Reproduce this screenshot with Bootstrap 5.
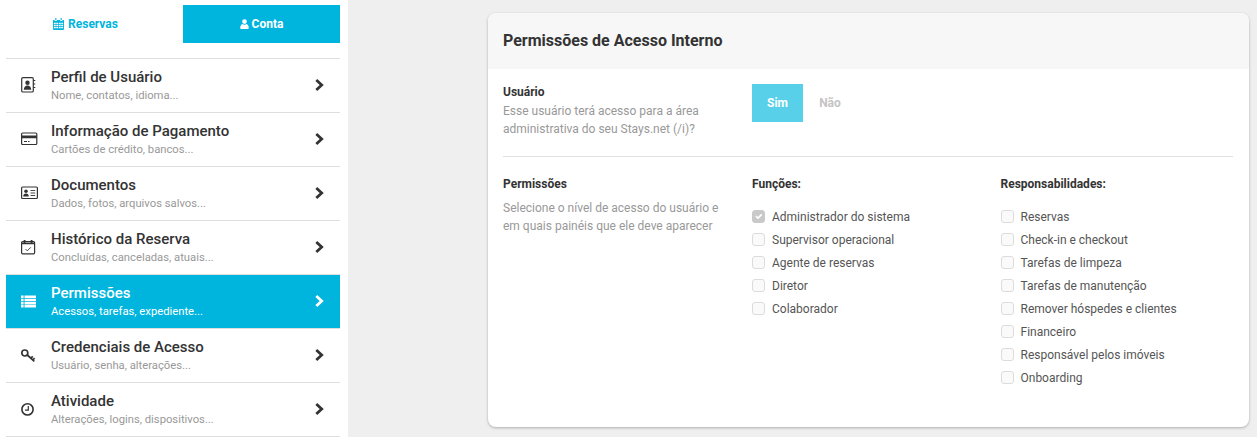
<!DOCTYPE html>
<html lang="pt"><head><meta charset="utf-8"><title>Permissões</title>
<link rel="stylesheet" href="https://cdn.jsdelivr.net/npm/bootstrap@5.3.0/dist/css/bootstrap.min.css">
<style>
html,body{height:437px;overflow:hidden}
body{background:#efefef;font-family:Roboto,"Liberation Sans",sans-serif;color:#333}
.side-col{width:348px;height:437px;background:#fff;padding:5px 8px 0 6px;flex:none}
.tab-row{height:54px;border-bottom:1px solid #dedede}
.tab-cell{width:159px;height:38px;font-size:12px;font-weight:700;color:#00b5dd;text-decoration:none;gap:4px}
.tab-on{background:#00b5dd;color:#fff;margin-left:18px;flex:1;gap:3px}
.tab-cell svg{width:11px;height:12px;fill:currentColor}
.tab-on svg{width:9px}
.menu-row{height:54px;border-bottom:1px solid #dedede;color:#333;text-decoration:none;padding-right:15px}
.menu-row .ic{width:45px;flex:none;padding-left:14px;display:flex;margin-bottom:2px}
.menu-row .ic svg{width:18px;height:18px;stroke:currentColor;fill:none;stroke-width:1.2}
.menu-row .ic svg .sol{fill:currentColor;stroke:none}
.m-title{font-size:15px;font-weight:500;line-height:18px;margin-top:-1px}
.m-sub{font-size:11.25px;line-height:14px;color:#999;margin-top:3px}
.chev{width:12px;height:14px;fill:none;stroke:currentColor;stroke-width:2.8;flex:none;margin-bottom:2px}
.menu-on{background:#00b5dd;color:#fff}
.menu-on .m-sub{color:#fff}
.panel-box{width:761px;height:414px;margin:13px 0 0 140px;background:#fff;border-radius:8px;box-shadow:0 1px 3px rgba(0,0,0,.28);overflow:hidden}
.panel-top{height:56px;background:#f7f7f7;padding:0 15px;font-size:16px;font-weight:700;color:#333;line-height:1;display:flex;align-items:center}
.panel-mid{padding:15px 16px 0 15px}
.grid-a{display:grid;grid-template-columns:249px 248.5px 1fr}
.user-block{height:73px;border-bottom:1px solid #e2e2e2}
.lab{font-size:12px;font-weight:700;line-height:16px;color:#333}
.user-block .lab{margin-bottom:2px}
.desc{font-size:12px;line-height:18px;color:#999;width:215px}
.toggle-btn{width:51px;height:38px;border:0;border-radius:0;font-size:12px;font-weight:700;background:#58d0e9;color:#fff;padding:0}
.toggle-off{background:transparent;color:#c4c4c4;padding-left:3px}
.perm-block{padding-top:19px}
.perm-block .desc{width:235px;margin-top:7px;line-height:18px}
.chk-list{margin-top:13px}
.chk-row{height:23px;margin:0;padding:0;font-size:12px;color:#555;gap:7px}
.chk-row .form-check-input{width:13px;height:13px;margin:0;float:none;border:1px solid #dcdcdc;border-radius:3px;background-color:#fafafa;opacity:1;flex:none}
.chk-row .form-check-input:checked{background-color:#c9c9c9;border-color:#c9c9c9}
</style></head><body>
<div class="d-flex">
<div class="side-col">
 <div class="tab-row d-flex">
  <a href="#" class="tab-cell d-flex align-items-center justify-content-center"><svg viewBox="0 0 12 13"><path d="M2.5 0h1.2v2.5H2.500zM8.300 0h1.200v2.500H8.300zM.5 2h1.300v1.300h2.400V2h3.600v1.300h2.400V2h1.300a.5.500 0 0 1 .5.5V12a1 1 0 0 1-1 1H1a1 1 0 0 1-1-1V2.500A.5.500 0 0 1 .5 2zM1 5v1.500h2V5zm2.600 0v1.500h2V5zm2.800 0v1.500h2V5zm2.600 0v1.500h2V5zM1 7.200v1.600h2V7.200zm2.600 0v1.600h2V7.200zm2.800 0v1.600h2V7.200zm2.600 0v1.600h2V7.200zM1 9.500V11h2V9.500zm2.600 0V11h2V9.500zm2.800 0V11h2V9.500zm2.600 0V11h2V9.500z" fill-rule="evenodd"/></svg>Reservas</a>
  <a href="#" class="tab-cell tab-on d-flex align-items-center justify-content-center"><svg viewBox="0 0 11 12"><circle cx="5.500" cy="3" r="2.900"/><path d="M.3 10.500C.3 8 1.500 6.300 3 6a4 4 0 0 0 5 0c1.500.3 2.700 2 2.700 4.500 0 1-.6 1.500-1.500 1.500H1.800C.9 12 .3 11.500.3 10.500z"/></svg>Conta</a>
 </div>
 <a href="#" class="menu-row d-flex align-items-center"><span class="ic"><svg viewBox="0 0 18 18"><rect x="1.700" y="1.700" width="11.600" height="14.300" rx="1.300"/><path d="M13.300 4.500h2M13.300 8h2M13.300 11.500h2"/><circle class="sol" cx="7.500" cy="6.800" r="2.200"/><path class="sol" d="M3.800 13.800c0-2.700 1.500-4.300 3.700-4.300s3.700 1.600 3.700 4.300z"/></svg></span><span class="flex-grow-1"><div class="m-title">Perfil de Usuário</div><div class="m-sub">Nome, contatos, idioma...</div></span><svg class="chev" viewBox="0 0 12 14"><path d="M3.300 2 8.700 7l-5.400 5"/></svg></a>
 <a href="#" class="menu-row d-flex align-items-center"><span class="ic"><svg viewBox="0 0 18 18"><rect x="1.600" y="3" width="15.200" height="11.500" rx="1"/><path class="sol" d="M1.600 5.500h15.200v2.800H1.600zM4 11h3v1H4zM8 11h1.500v1H8z"/></svg></span><span class="flex-grow-1"><div class="m-title">Informação de Pagamento</div><div class="m-sub">Cartões de crédito, bancos...</div></span><svg class="chev" viewBox="0 0 12 14"><path d="M3.300 2 8.700 7l-5.400 5"/></svg></a>
 <a href="#" class="menu-row d-flex align-items-center"><span class="ic"><svg viewBox="0 0 18 18"><rect x="1.600" y="3" width="15.800" height="11.500" rx="1"/><circle class="sol" cx="6" cy="7.300" r="1.800"/><path class="sol" d="M3.200 12.500c0-2 1.100-3 2.800-3s2.800 1 2.800 3z"/><path d="M10.500 6.500h4.700M10.500 9h4.700M10.500 11.500h4.700" stroke-width=".9"/></svg></span><span class="flex-grow-1"><div class="m-title">Documentos</div><div class="m-sub">Dados, fotos, arquivos salvos...</div></span><svg class="chev" viewBox="0 0 12 14"><path d="M3.300 2 8.700 7l-5.400 5"/></svg></a>
 <a href="#" class="menu-row d-flex align-items-center"><span class="ic"><svg viewBox="0 0 18 18"><rect x="1.600" y="3.500" width="13" height="12.300" rx="1"/><path class="sol" d="M1.600 4.500h13v1.800h-13zM3.700 2h1.800v3H3.700zM10.700 2h1.800v3h-1.800z"/><path d="m5.500 11 1.800 1.800 3.500-3.500" stroke-width=".9"/></svg></span><span class="flex-grow-1"><div class="m-title">Histórico da Reserva</div><div class="m-sub">Concluídas, canceladas, atuais...</div></span><svg class="chev" viewBox="0 0 12 14"><path d="M3.300 2 8.700 7l-5.400 5"/></svg></a>
 <a href="#" class="menu-row menu-on d-flex align-items-center"><span class="ic"><svg viewBox="0 0 18 18"><path class="sol" d="M1 3.500h2.600V6H1zM4.500 3.500h11.500V6H4.500zM1 6.800h2.600v2.400H1zM4.500 6.800h11.500v2.400H4.500zM1 10h2.600v2.400H1zM4.500 10h11.500v2.400H4.500zM1 13.100h2.600v2.400H1zM4.500 13.100h11.500v2.400H4.500z"/></svg></span><span class="flex-grow-1"><div class="m-title">Permissões</div><div class="m-sub">Acessos, tarefas, expediente...</div></span><svg class="chev" viewBox="0 0 12 14"><path d="M3.300 2 8.700 7l-5.400 5"/></svg></a>
 <a href="#" class="menu-row d-flex align-items-center"><span class="ic"><svg viewBox="0 0 18 18"><circle cx="4.800" cy="7" r="3" stroke-width="1.700"/><path d="m7.300 9 7 6.300M10.800 12.200l2-1.800M12.800 14l1.800-1.800" stroke-width="1.700"/></svg></span><span class="flex-grow-1"><div class="m-title">Credenciais de Acesso</div><div class="m-sub">Usuário, senha, alterações...</div></span><svg class="chev" viewBox="0 0 12 14"><path d="M3.300 2 8.700 7l-5.400 5"/></svg></a>
 <a href="#" class="menu-row d-flex align-items-center"><span class="ic"><svg viewBox="0 0 18 18"><circle cx="7.500" cy="9.400" r="5.600" stroke-width="1.600"/><path d="M8.300 6v4.200H5" stroke-width="1.200"/></svg></span><span class="flex-grow-1"><div class="m-title">Atividade</div><div class="m-sub">Alterações, logins, dispositivos...</div></span><svg class="chev" viewBox="0 0 12 14"><path d="M3.300 2 8.700 7l-5.400 5"/></svg></a>
</div>
<div class="panel-box flex-none">
 <div class="panel-top">Permissões de Acesso Interno</div>
 <div class="panel-mid">
  <div class="grid-a user-block">
   <div><div class="lab">Usuário</div><div class="desc">Esse usuário terá acesso para a área administrativa do seu Stays.net (/i)?</div></div>
   <div class="d-flex align-items-start"><button class="btn toggle-btn">Sim</button><button class="btn toggle-btn toggle-off">Não</button></div>
  </div>
  <div class="grid-a perm-block">
   <div><div class="lab">Permissões</div><div class="desc">Selecione o nível de acesso do usuário e em quais painéis que ele deve aparecer</div></div>
   <div><div class="lab">Funções:</div><div class="chk-list">
    <label class="chk-row d-flex align-items-center"><input class="form-check-input" type="checkbox" checked disabled>Administrador do sistema</label>
    <label class="chk-row d-flex align-items-center"><input class="form-check-input" type="checkbox">Supervisor operacional</label>
    <label class="chk-row d-flex align-items-center"><input class="form-check-input" type="checkbox">Agente de reservas</label>
    <label class="chk-row d-flex align-items-center"><input class="form-check-input" type="checkbox">Diretor</label>
    <label class="chk-row d-flex align-items-center"><input class="form-check-input" type="checkbox">Colaborador</label>
   </div></div>
   <div><div class="lab">Responsabilidades:</div><div class="chk-list">
    <label class="chk-row d-flex align-items-center"><input class="form-check-input" type="checkbox">Reservas</label>
    <label class="chk-row d-flex align-items-center"><input class="form-check-input" type="checkbox">Check-in e checkout</label>
    <label class="chk-row d-flex align-items-center"><input class="form-check-input" type="checkbox">Tarefas de limpeza</label>
    <label class="chk-row d-flex align-items-center"><input class="form-check-input" type="checkbox">Tarefas de manutenção</label>
    <label class="chk-row d-flex align-items-center"><input class="form-check-input" type="checkbox">Remover hóspedes e clientes</label>
    <label class="chk-row d-flex align-items-center"><input class="form-check-input" type="checkbox">Financeiro</label>
    <label class="chk-row d-flex align-items-center"><input class="form-check-input" type="checkbox">Responsável pelos imóveis</label>
    <label class="chk-row d-flex align-items-center"><input class="form-check-input" type="checkbox">Onboarding</label>
   </div></div>
  </div>
 </div>
</div>
</div>
</body></html>
